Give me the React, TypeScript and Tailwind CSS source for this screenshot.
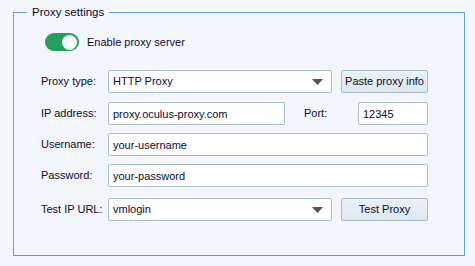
import { useState } from "react";

const inputCls =
  "h-[23px] bg-white border border-[#a9bfcf] rounded-[2px] px-[4px] text-[11px] text-[#0b0b2e] outline-none";

function Select({ value, width }: { value: string; width: string }) {
  return (
    <div className={`${inputCls} ${width} flex items-center justify-between pr-[8px]`}>
      <span>{value}</span>
      <svg width="11" height="6" viewBox="0 0 11 6">
        <path d="M0 0h11L5.5 6z" fill="#555" />
      </svg>
    </div>
  );
}

function Btn({ children }: { children: string }) {
  return (
    <button className="h-[23px] w-[87px] whitespace-nowrap rounded-[2px] border border-[#a9bccc] bg-gradient-to-b from-[#eaf1f7] to-[#dde7f0] text-[11px] text-[#0b0b2e]">
      {children}
    </button>
  );
}

export default function App() {
  const [on, setOn] = useState(true);

  return (
    <div className="w-[475px] h-[266px] bg-[#f3f6fa] pt-[4px] pl-[13px] text-[11px] whitespace-nowrap text-[#0b0b2e] font-['Liberation_Sans',Arial,sans-serif]">
      <fieldset className="w-[452px] h-[252px] border border-[#5aa5d2]">
        <legend className="ml-[13px] px-[5px] leading-[16px] text-[11.5px]">Proxy settings</legend>

        <div className="pl-[27px]">
          <div className="mt-[13px] ml-[4px] flex items-center gap-[8px]">
            <button
              onClick={() => setOn(!on)}
              className="w-[34px] h-[18px] rounded-full bg-[#23a15a] flex items-center justify-end pr-[2px]"
            >
              <span className="w-[15px] h-[15px] rounded-full bg-white" />
            </button>
            <span>Enable proxy server</span>
          </div>

          <div className="mt-[19px] flex items-center">
            <span className="w-[67px]">Proxy type:</span>
            <Select value="HTTP Proxy" width="w-[224px]" />
            <div className="ml-[9px]">
              <Btn>Paste proxy info</Btn>
            </div>
          </div>

          <div className="mt-[9px] flex items-center">
            <span className="w-[67px]">IP address:</span>
            <input className={`${inputCls} w-[177px]`} defaultValue="proxy.oculus-proxy.com" />
            <span className="ml-[19px] w-[54px]">Port:</span>
            <input className={`${inputCls} w-[70px]`} defaultValue="12345" />
          </div>

          <div className="mt-[8px] flex items-center">
            <span className="w-[67px]">Username:</span>
            <input className={`${inputCls} w-[320px]`} defaultValue="your-username" />
          </div>

          <div className="mt-[8px] flex items-center">
            <span className="w-[67px]">Password:</span>
            <input className={`${inputCls} w-[320px]`} defaultValue="your-password" />
          </div>

          <div className="mt-[11px] flex items-center">
            <span className="w-[67px]">Test IP URL:</span>
            <Select value="vmlogin" width="w-[224px]" />
            <div className="ml-[9px]">
              <Btn>Test Proxy</Btn>
            </div>
          </div>
        </div>
      </fieldset>
    </div>
  );
}
